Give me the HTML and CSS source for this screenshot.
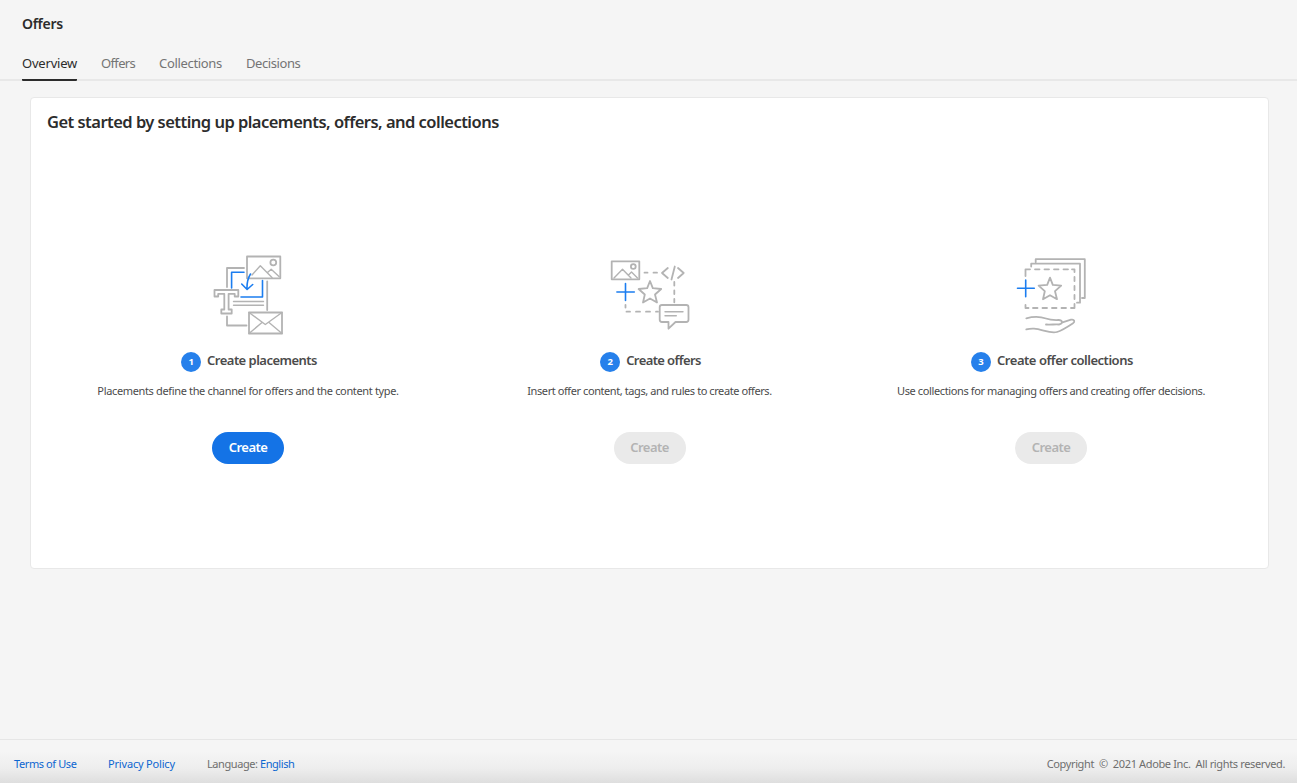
FILE: index.html
```html
<!DOCTYPE html>
<html lang="en">
<head>
<meta charset="utf-8">
<title>Offers</title>
<link rel="stylesheet" href="styles.css">
</head>
<body>
<header class="header">
  <h1 class="page-title">Offers</h1>
  <nav class="tabs">
    <a class="tab tab-active">Overview</a>
    <a class="tab tab-offers">Offers</a>
    <a class="tab tab-collections">Collections</a>
    <a class="tab tab-decisions">Decisions</a>
  </nav>
</header>
<main class="main">
  <section class="card">
    <h2 class="card-title">Get started by setting up placements, offers, and collections</h2>
    <div class="steps">
      <article class="step">
        <svg class="art" width="100" height="100" viewBox="-2 0 100 100">
          <rect x="47" y="11.5" width="33.3" height="21.8"/>
          <circle cx="73.3" cy="17.5" r="2.9"/>
          <path class="thin" d="M52 30L60.3 20.8L72 32.5M67.5 27.5L71.2 24.3L79 31.5"/>
          <path d="M44 23H27V42M67.2 36.3V65M27 71.5V80.5H46.5"/>
          <path class="thin" d="M33.5 56.5H63.5M33.5 60.2H63.5"/>
          <path class="blue" d="M44 27.3H31.6V43M62.5 35.5V52H41M50.5 29C48 33 46.8 38 47 44M41.7 39L47.1 44.5L52.7 39.5"/>
          <path d="M14.5 45H38.3V51.5H34.7V48.8H28.6V64.5H31.7V68.5H21.3V64.5H24.3V48.8H18.2V51.5H14.5Z"/>
          <rect x="49" y="67.5" width="33" height="21"/>
          <path class="thin" d="M49 67.5L65.3 79.5L82 67.5M49 88.5L62 77.5M82 88.5L69 77.5"/>
        </svg>
        <h3 class="step-title"><span class="num">1</span><span class="label label-1">Create placements</span></h3>
        <p class="desc desc-1">Placements define the channel for offers and the content type.</p>
        <button class="button button-primary">Create</button>
      </article>
      <article class="step">
        <svg class="art" width="99" height="100" viewBox="0 0 99 100">
          <rect x="11.7" y="16.3" width="27.6" height="18"/>
          <circle cx="33.3" cy="21.5" r="2.4"/>
          <path class="thin" d="M14 33L22.5 24.3L31 33M28.500 30L31.500 27L37.500 33"/>
          <path d="M44.500 27.700H47.500M53.500 27.700H57M74.300 37V40.500M74.300 45.500V49M74.300 54V57.300M25.500 60V62.500M26.500 66.700H30M36 66.700H40M46 66.700H50M56 66.700H58"/>
          <path d="M67.800 23L62 28L67.800 33M74.800 21.500L71.500 34.500M78 23L83.700 28L78 33"/>
          <path class="blue" d="M16.900 47H34.300M25.500 38.500V55.500"/>
          <path d="M50 36L52.800 43.200L61.200 44L55 49.500L57 57.500L50 53.500L43 57.500L44.800 49.500L38.600 44L47.200 43.200Z"/>
          <path d="M62 60H86.200Q88.500 60 88.500 62.300V74.500Q88.500 77 86.200 77H75.500L68.500 83.700V77H62Q59.700 77 59.700 74.500V62.300Q59.700 60 62 60Z"/>
          <path class="thin" d="M65 66.700H83M65 70.700H76.300"/>
        </svg>
        <h3 class="step-title"><span class="num">2</span><span class="label label-2">Create offers</span></h3>
        <p class="desc desc-2">Insert offer content, tags, and rules to create offers.</p>
        <button class="button" disabled>Create</button>
      </article>
      <article class="step">
        <svg class="art" width="100" height="100" viewBox="1 0 100 100">
          <path d="M35.700 17V14.200H84.800V53H82M31.200 21.500V18.700H80V57.700H77"/>
          <path d="M25.500 31V24.300H30M35 24.300H39.500M44.500 24.300H49M54 24.300H58.500M63.500 24.300H68M72 24.300H74.500V27M74.500 32V36M74.500 41V45M74.500 50V54M74.500 59V63H71M66 63H61.500M56.500 63H52M47 63H42.500M37.500 63H33M28.500 63H25.500V60"/>
          <path class="blue" d="M17.500 43.300H34.300M25.700 35V51.700"/>
          <path d="M50 32.700L52.800 39.900L61.200 40.700L55 46.200L57 54.200L50 50.200L43 54.200L44.800 46.200L38.600 40.700L47.200 39.900Z"/>
          <path d="M26.300 73.300C34 71.300 40 71.500 46 73.500C50 75 54 75.200 58.500 75C62.500 75 63.500 78.500 59 79.500C55 79 51 80 46 79.500M62.500 77.300L71 74.700C74.500 74 75.300 76.500 73 78.200C68 81.500 62 85.500 57 87C50 89 42 84 34 83.600Q30 83.400 26.300 84.400"/>
        </svg>
        <h3 class="step-title"><span class="num">3</span><span class="label label-3">Create offer collections</span></h3>
        <p class="desc desc-3">Use collections for managing offers and creating offer decisions.</p>
        <button class="button" disabled>Create</button>
      </article>
    </div>
  </section>
</main>
<footer class="footer">
  <a class="link terms">Terms of Use</a>
  <a class="link privacy">Privacy Policy</a>
  <span class="language">Language: <a class="link">English</a></span>
  <span class="copyright">Copyright &nbsp;©&nbsp; 2021 Adobe Inc. &nbsp;All rights reserved.</span>
</footer>
</body>
</html>
```
FILE: styles.css
```css
* { box-sizing: border-box; }
body {
  margin: 0;
  height: 783px;
  overflow: hidden;
  display: flex;
  flex-direction: column;
  background: #f5f5f5;
  color: #4b4b4b;
  font-family: "Noto Sans", "Open Sans", sans-serif;
}
h1, h2, h3, p { margin: 0; font-weight: 600; white-space: nowrap; }
.header {
  height: 81px;
  padding: 0 22px;
  border-bottom: 2px solid #e8e8e8;
  flex: none;
}
.page-title {
  padding-top: 14px;
  height: 48px;
  font-size: 14px;
  line-height: 20px;
  letter-spacing: -0.3px;
  color: #2c2c2c;
}
.tabs { display: flex; gap: 24px; height: 33px; }
.tab {
  height: 33px;
  line-height: 31px;
  font-size: 13px;
  letter-spacing: -0.2px;
  color: #747474;
  white-space: nowrap;
}
.tab-active { width: 55px; color: #2c2c2c; border-bottom: 2px solid #2c2c2c; border-radius: 1px; }
.tab-offers { width: 34px; letter-spacing: -0.65px; }
.tab-collections { width: 63px; letter-spacing: -0.33px; }
.tab-decisions { letter-spacing: -0.42px; }
.main { flex: 1; padding: 16px 28px 0 30px; }
.card {
  height: 472px;
  padding: 0 16px;
  background: #fff;
  border: 1px solid #e8e8e8;
  border-radius: 4px;
}
.card-title {
  padding-top: 12px;
  height: 147px;
  font-size: 16.5px;
  line-height: 24px;
  letter-spacing: -0.53px;
  color: #2c2c2c;
}
.steps { display: grid; grid-template-columns: 402px 401px 402px; }
.step { display: flex; flex-direction: column; align-items: center; }
.art {
  flex: none;
  fill: none;
  stroke: #b3b3b3;
  stroke-width: 1.8;
  stroke-linejoin: round;
  stroke-linecap: round;
}
.thin { stroke-width: 1.4; }
.blue { stroke: #1b7df0; stroke-width: 1.6; }
.step-title {
  display: flex;
  align-items: center;
  gap: 6px;
  height: 20px;
  margin-top: 7px;
  padding-left: 2px;
  font-size: 13px;
}
.num {
  width: 20px;
  height: 20px;
  border-radius: 50%;
  background: #2680eb;
  color: #fff;
  font-size: 9.5px;
  font-weight: 700;
  line-height: 20px;
  text-align: center;
}
.label { line-height: 16px; padding-bottom: 4px; }
.label-1 { letter-spacing: -0.53px; }
.label-2 { letter-spacing: -0.6px; }
.label-3 { letter-spacing: -0.47px; }
.desc {
  margin-top: 11px;
  font-size: 11px;
  font-weight: 400;
  line-height: 16px;
}
.desc-1 { letter-spacing: -0.35px; }
.desc-2 { letter-spacing: -0.42px; }
.desc-3 { letter-spacing: -0.38px; }
.button {
  width: 72px;
  height: 32px;
  margin-top: 33px;
  padding: 0 0 2px;
  border: 0;
  border-radius: 16px;
  background: #eaeaea;
  color: #b3b3b3;
  font: 600 13px "Noto Sans", "Open Sans", sans-serif;
  letter-spacing: -0.55px;
}
.button-primary { background: #1473e6; color: #fff; }
.footer {
  flex: none;
  display: flex;
  height: 44px;
  padding: 0 12px 0 14px;
  border-top: 1px solid #e6e6e6;
  background: linear-gradient(#f5f5f5 25%, #eeeeee 65%, #dedede);
  font-size: 11px;
  line-height: 47px;
  color: #6e6e6e;
  white-space: nowrap;
}
.link { color: #0d66d0; }
.terms { width: 94px; letter-spacing: -0.4px; }
.privacy { width: 99px; letter-spacing: -0.18px; }
.language { letter-spacing: -0.43px; }
.copyright { margin-left: auto; letter-spacing: -0.36px; }
```
